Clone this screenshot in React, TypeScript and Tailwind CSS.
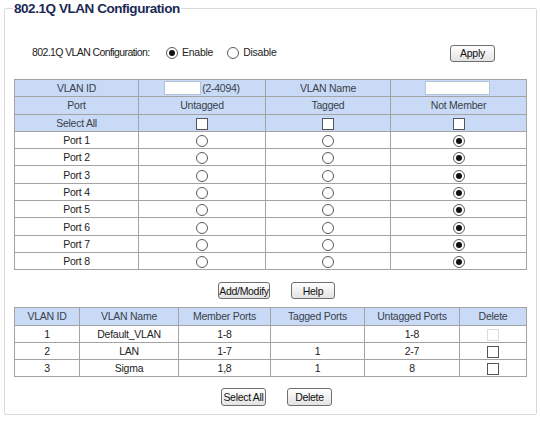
import React from "react";

const font = { fontFamily: '"Liberation Sans", Arial, sans-serif' };

function Radio({ checked }: { checked?: boolean }) {
  return (
    <span className="inline-grid h-[12px] w-[12px] place-items-center rounded-full border border-[#5a5a5a] bg-white align-middle">
      {checked ? <span className="h-[6px] w-[6px] rounded-full bg-[#111]" /> : null}
    </span>
  );
}

function Check({ disabled }: { disabled?: boolean }) {
  return (
    <span
      className={
        disabled
          ? "inline-block h-[12px] w-[12px] border border-[#dcdcdc] bg-white align-middle"
          : "inline-block h-[12px] w-[12px] border border-[#555] bg-white align-middle"
      }
    />
  );
}

function Btn({ label, w }: { label: string; w: string }) {
  return (
    <button
      className={`${w} whitespace-nowrap rounded-[3px] border border-[#6f6f6f] bg-gradient-to-b from-white to-[#e3e3e3] px-0 text-[10.5px] leading-none tracking-[-0.3px] text-[#111]`}
    >
      {label}
    </button>
  );
}

const ports = [1, 2, 3, 4, 5, 6, 7, 8];

const vlans = [
  { id: "1", name: "Default_VLAN", member: "1-8", tagged: "", untagged: "1-8", fixed: true },
  { id: "2", name: "LAN", member: "1-7", tagged: "1", untagged: "2-7", fixed: false },
  { id: "3", name: "Sigma", member: "1,8", tagged: "1", untagged: "8", fixed: false },
];

export default function App() {
  const cell = "h-[17.3px] border border-[#a3a3a3] p-0 text-center align-middle leading-[14px]";
  const head = "h-[17.3px] border border-[#a3a3a3] bg-[#c8daf6] p-0 text-center align-middle leading-[14px] text-[#3a3f4a]";

  return (
    <div className="h-[428px] w-[540px] bg-white text-[10.5px] tracking-[-0.25px] text-[#222]" style={font}>
      <fieldset className="mx-[4px] h-[415px] w-[530px] rounded-[2px] border border-[#d9d9d9]">
        <legend className="ml-[8px] px-[1px] text-[13.5px] font-bold leading-[17px] tracking-[-0.45px] text-[#1b2a55]">
          802.1Q VLAN Configuration
        </legend>

        <div className="px-[9px]">
          <div className="mt-[27px] flex h-[18px] items-center whitespace-nowrap">
            <span className="ml-[18px] w-[134px] tracking-[-0.6px]">802.1Q VLAN Configuration:</span>
            <label className="flex items-center gap-[4px]">
              <Radio checked />
              <span>Enable</span>
            </label>
            <label className="ml-[14px] flex items-center gap-[4px]">
              <Radio />
              <span>Disable</span>
            </label>
            <div className="ml-auto mr-[32px] flex">
              <Btn label="Apply" w="w-[45px] h-[17px]" />
            </div>
          </div>

          <table className="mt-[17px] w-[512px] table-fixed border-collapse">
            <colgroup>
              <col className="w-[124px]" />
              <col className="w-[127px]" />
              <col className="w-[125px]" />
              <col className="w-[136px]" />
            </colgroup>
            <tbody>
              <tr>
                <td className={head}>VLAN ID</td>
                <td className={head}>
                  <div className="flex items-center justify-center">
                    <span className="h-[14px] w-[37px] border border-[#b8c4d4] bg-white" />
                    <span className="ml-[1px]">(2-4094)</span>
                  </div>
                </td>
                <td className={head}>VLAN Name</td>
                <td className={head}>
                  <div className="flex justify-end pr-[36px]">
                    <span className="h-[14px] w-[65px] border border-[#b8c4d4] bg-white" />
                  </div>
                </td>
              </tr>
              <tr>
                <td className={head}>Port</td>
                <td className={head}>Untagged</td>
                <td className={head}>Tagged</td>
                <td className={head}>Not Member</td>
              </tr>
              <tr>
                <td className={head}>Select All</td>
                <td className={head}><Check /></td>
                <td className={head}><Check /></td>
                <td className={head}><Check /></td>
              </tr>
              {ports.map((p) => (
                <tr key={p}>
                  <td className={cell}>Port {p}</td>
                  <td className={cell}><Radio /></td>
                  <td className={cell}><Radio /></td>
                  <td className={cell}><Radio checked /></td>
                </tr>
              ))}
            </tbody>
          </table>

          <div className="mt-[12px] flex justify-center gap-[21px] pl-[12px]">
            <Btn label="Add/Modify" w="w-[52px] h-[17px]" />
            <Btn label="Help" w="w-[44px] h-[17px]" />
          </div>

          <table className="mt-[8px] w-[512px] table-fixed border-collapse">
            <colgroup>
              <col className="w-[65px]" />
              <col className="w-[99px]" />
              <col className="w-[92px]" />
              <col className="w-[94px]" />
              <col className="w-[95px]" />
              <col className="w-[67px]" />
            </colgroup>
            <tbody>
              <tr>
                <td className={head}>VLAN ID</td>
                <td className={head}>VLAN Name</td>
                <td className={head}>Member Ports</td>
                <td className={head}>Tagged Ports</td>
                <td className={head}>Untagged Ports</td>
                <td className={head}>Delete</td>
              </tr>
              {vlans.map((v) => (
                <tr key={v.id}>
                  <td className={cell}>{v.id}</td>
                  <td className={cell}>{v.name}</td>
                  <td className={cell}>{v.member}</td>
                  <td className={cell}>{v.tagged}</td>
                  <td className={cell}>{v.untagged}</td>
                  <td className={cell}><Check disabled={v.fixed} /></td>
                </tr>
              ))}
            </tbody>
          </table>

          <div className="mt-[11px] flex justify-center gap-[21px] pl-[12px]">
            <Btn label="Select All" w="w-[45px] h-[18px]" />
            <Btn label="Delete" w="w-[45px] h-[18px]" />
          </div>
        </div>
      </fieldset>
    </div>
  );
}
